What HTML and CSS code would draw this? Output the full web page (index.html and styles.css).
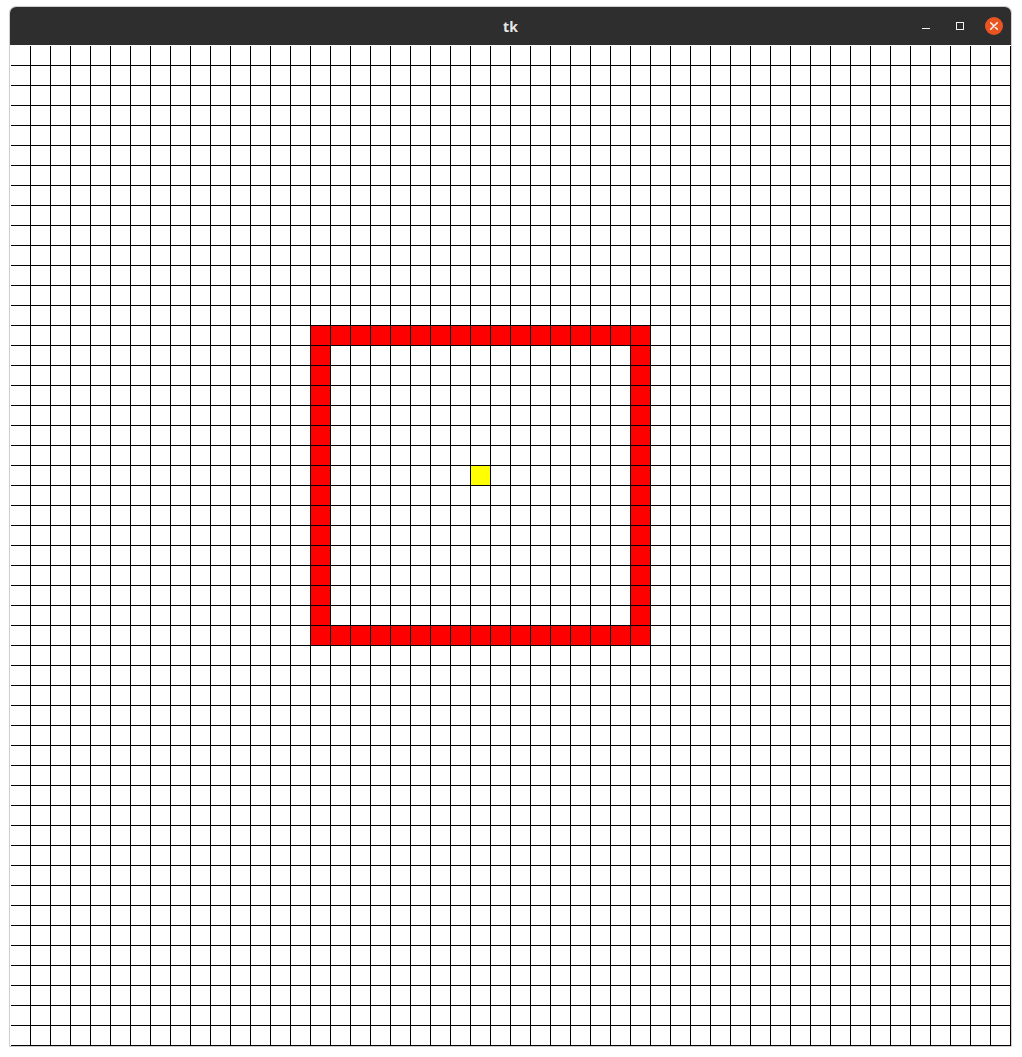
FILE: index.html
```html
<!DOCTYPE html>
<html>
<head>
<meta charset="utf-8">
<title>tk</title>
<link rel="stylesheet" href="styles.css">
</head>
<body>
<div class="window">
  <div class="titlebar">
    <div class="spacer"></div>
    <div class="title">tk</div>
    <div class="controls">
      <div class="btn">
        <svg width="24" height="24" viewBox="0 0 24 24"><line x1="8" y1="14.5" x2="16" y2="14.5" stroke="#f2f2f2" stroke-width="1"/></svg>
      </div>
      <div class="btn">
        <svg width="24" height="24" viewBox="0 0 24 24"><rect x="8.5" y="8.5" width="7" height="7" fill="none" stroke="#f2f2f2" stroke-width="1"/></svg>
      </div>
      <div class="btn">
        <svg width="24" height="24" viewBox="0 0 24 24"><circle cx="12" cy="12" r="9" fill="#e95420"/><path d="M8.7 8.7 L15.3 15.3 M15.3 8.7 L8.7 15.3" stroke="#ffffff" stroke-width="1.4" stroke-linecap="round"/></svg>
      </div>
    </div>
  </div>
  <div class="board">
    <div class="cell red top"></div>
    <div class="cell red left"></div>
    <div class="cell red right"></div>
    <div class="cell red bottom"></div>
    <div class="cell yellow player"></div>
  </div>
</div>
</body>
</html>
```

FILE: styles.css
```css
html, body {
  margin: 0;
  padding: 0;
  background: #ffffff;
}

.window {
  margin: 6px 0 0 9px;
  width: 1001px;
  border: 1px solid #cfcfcf;
  border-radius: 7px 7px 0 0;
  overflow: hidden;
  box-shadow: 0 0 1px rgba(0,0,0,0.15);
}

.titlebar {
  height: 38px;
  background: #2f2e2e;
  display: grid;
  grid-template-columns: 1fr auto 1fr;
  align-items: center;
}

.title {
  font-family: "Noto Sans", "DejaVu Sans", sans-serif;
  font-weight: 700;
  font-size: 14px;
  color: #e6e6e6;
  line-height: 1;
  padding-top: 1px;
}

.controls {
  display: flex;
  justify-content: flex-end;
  gap: 10px;
  padding-right: 5px;
}

.btn {
  width: 24px;
  height: 24px;
}

.btn svg {
  display: block;
}

.board {
  position: relative;
  display: grid;
  grid-template-columns: repeat(50, 20px);
  grid-template-rows: repeat(50, 20px);
  padding: 1px 0 0 1px;
  background: #ffffff;
}

.board::after {
  content: "";
  position: absolute;
  top: 1px;
  left: 1px;
  right: 0;
  bottom: 0;
  pointer-events: none;
  background-image:
    linear-gradient(to right, transparent 19px, #000000 19px),
    linear-gradient(to bottom, transparent 19px, #000000 19px);
  background-size: 20px 20px, 20px 20px;
}

.red {
  background: #ff0000;
}

.yellow {
  background: #ffff00;
}

.top {
  grid-row: 15;
  grid-column: 16 / span 17;
}

.bottom {
  grid-row: 30;
  grid-column: 16 / span 17;
}

.left {
  grid-row: 16 / span 14;
  grid-column: 16;
}

.right {
  grid-row: 16 / span 14;
  grid-column: 32;
}

.player {
  grid-row: 22;
  grid-column: 24;
}
```
